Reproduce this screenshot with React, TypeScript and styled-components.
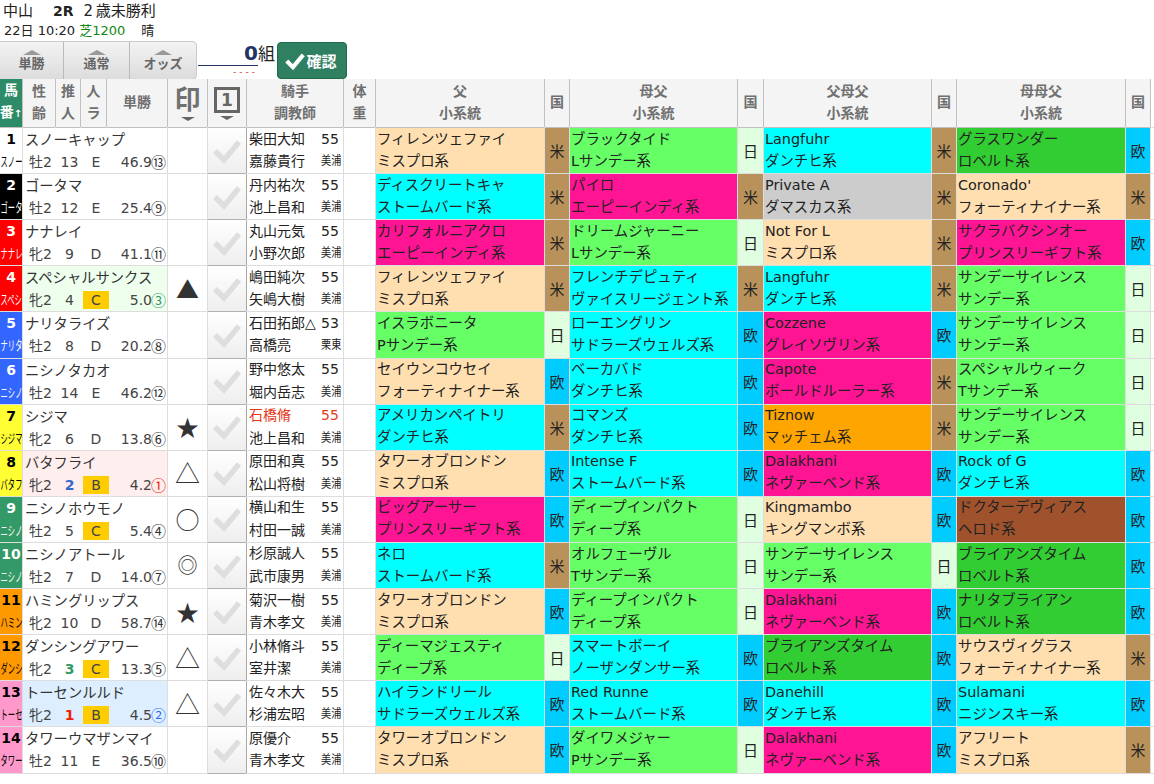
import { Fragment } from "react";
import styled, { createGlobalStyle } from "styled-components";

const SANS = `"DejaVu Sans", "Noto Sans CJK JP", sans-serif`;
const CJK = `"Noto Sans CJK JP", sans-serif`;

const LINE_COLORS: Record<string, string> = {
  W: "#ffdeb0",
  G: "#66ff66",
  C: "#00ffff",
  P: "#ff1493",
  L: "#32cd32",
  O: "#ffa500",
  A: "#cccccc",
  B: "#a0522d",
};

const COUNTRY_COLORS: Record<string, string> = {
  米: "#b8925a",
  日: "#e0ffe0",
  欧: "#00ccff",
};

const FRAMES = [
  { bg: "#ffffff", fg: "#000" },
  { bg: "#000000", fg: "#fff" },
  { bg: "#ff0000", fg: "#fff" },
  { bg: "#3366ff", fg: "#fff" },
  { bg: "#ffff33", fg: "#000" },
  { bg: "#339966", fg: "#fff" },
  { bg: "#ff9900", fg: "#000" },
  { bg: "#ff99cc", fg: "#000" },
];

const MARK_SIZES: Record<string, number> = {
  "▲": 23,
  "★": 23,
  "△": 25,
  "○": 24,
  "◎": 20,
};

type Ped = [string, string, string, string];

type Horse = {
  no: number;
  frame: number;
  short: string;
  name: string;
  sex: string;
  pop: string;
  popColor?: string;
  rank: string;
  odds: string;
  order: string;
  orderColor?: string;
  tint?: string;
  mark?: string;
  jockey: string;
  weight: string;
  trainer: string;
  stable: string;
  red?: boolean;
  peds: Ped[];
};

const TOWER: Ped = ["タワーオブロンドン", "ミスプロ系", "W", "欧"];
const FIRENZE: Ped = ["フィレンツェファイ", "ミスプロ系", "W", "米"];
const LANGFUHR: Ped = ["Langfuhr", "ダンチヒ系", "C", "米"];
const SS: Ped = ["サンデーサイレンス", "サンデー系", "G", "日"];
const DALAKHANI: Ped = ["Dalakhani", "ネヴァーベンド系", "P", "欧"];
const DEEP: Ped = ["ディープインパクト", "ディープ系", "G", "日"];

const HORSES: Horse[] = [
  { no: 1, frame: 0, short: "スノー", name: "スノーキャップ", sex: "牡2", pop: "13", rank: "E", odds: "46.9", order: "⑬", jockey: "柴田大知", weight: "55", trainer: "嘉藤貴行", stable: "美浦",
    peds: [FIRENZE, ["ブラックタイド", "Lサンデー系", "G", "日"], LANGFUHR, ["グラスワンダー", "ロベルト系", "L", "欧"]] },
  { no: 2, frame: 1, short: "ゴータ", name: "ゴータマ", sex: "牡2", pop: "12", rank: "E", odds: "25.4", order: "⑨", jockey: "丹内祐次", weight: "55", trainer: "池上昌和", stable: "美浦",
    peds: [["ディスクリートキャ", "ストームバード系", "C", "米"], ["パイロ", "エーピーインディ系", "P", "米"], ["Private A", "ダマスカス系", "A", "米"], ["Coronado'", "フォーティナイナー系", "W", "米"]] },
  { no: 3, frame: 2, short: "ナナレ", name: "ナナレイ", sex: "牝2", pop: "9", rank: "D", odds: "41.1", order: "⑪", jockey: "丸山元気", weight: "55", trainer: "小野次郎", stable: "美浦",
    peds: [["カリフォルニアクロ", "エーピーインディ系", "P", "米"], ["ドリームジャーニー", "Lサンデー系", "G", "日"], ["Not For L", "ミスプロ系", "W", "米"], ["サクラバクシンオー", "プリンスリーギフト系", "P", "欧"]] },
  { no: 4, frame: 2, short: "スペシ", name: "スペシャルサンクス", sex: "牝2", pop: "4", rank: "C", odds: "5.0", order: "③", orderColor: "#339966", tint: "#eeffee", mark: "▲", jockey: "嶋田純次", weight: "55", trainer: "矢嶋大樹", stable: "美浦",
    peds: [FIRENZE, ["フレンチデピュティ", "ヴァイスリージェント系", "C", "米"], LANGFUHR, SS] },
  { no: 5, frame: 3, short: "ナリタ", name: "ナリタライズ", sex: "牡2", pop: "8", rank: "D", odds: "20.2", order: "⑧", jockey: "石田拓郎△", weight: "53", trainer: "高橋亮", stable: "栗東",
    peds: [["イスラボニータ", "Pサンデー系", "G", "日"], ["ローエングリン", "サドラーズウェルズ系", "C", "欧"], ["Cozzene", "グレイソヴリン系", "P", "欧"], SS] },
  { no: 6, frame: 3, short: "ニシノ", name: "ニシノタカオ", sex: "牡2", pop: "14", rank: "E", odds: "46.2", order: "⑫", jockey: "野中悠太", weight: "55", trainer: "堀内岳志", stable: "美浦",
    peds: [["セイウンコウセイ", "フォーティナイナー系", "W", "欧"], ["ベーカバド", "ダンチヒ系", "C", "欧"], ["Capote", "ボールドルーラー系", "P", "米"], ["スペシャルウィーク", "Tサンデー系", "G", "日"]] },
  { no: 7, frame: 4, short: "シジマ", name: "シジマ", sex: "牝2", pop: "6", rank: "D", odds: "13.8", order: "⑥", mark: "★", jockey: "石橋脩", weight: "55", trainer: "池上昌和", stable: "美浦", red: true,
    peds: [["アメリカンペイトリ", "ダンチヒ系", "C", "米"], ["コマンズ", "ダンチヒ系", "C", "欧"], ["Tiznow", "マッチェム系", "O", "米"], SS] },
  { no: 8, frame: 4, short: "バタフ", name: "バタフライ", sex: "牝2", pop: "2", popColor: "#3366cc", rank: "B", odds: "4.2", order: "①", orderColor: "#ee2200", tint: "#ffeeee", mark: "△", jockey: "原田和真", weight: "55", trainer: "松山将樹", stable: "美浦",
    peds: [TOWER, ["Intense F", "ストームバード系", "C", "欧"], DALAKHANI, ["Rock of G", "ダンチヒ系", "C", "欧"]] },
  { no: 9, frame: 5, short: "ニシノ", name: "ニシノホウモノ", sex: "牡2", pop: "5", rank: "C", odds: "5.4", order: "④", mark: "○", jockey: "横山和生", weight: "55", trainer: "村田一誠", stable: "美浦",
    peds: [["ビッグアーサー", "プリンスリーギフト系", "P", "欧"], DEEP, ["Kingmambo", "キングマンボ系", "W", "欧"], ["ドクターデヴィアス", "ヘロド系", "B", "欧"]] },
  { no: 10, frame: 5, short: "ニシノ", name: "ニシノアトール", sex: "牡2", pop: "7", rank: "D", odds: "14.0", order: "⑦", mark: "◎", jockey: "杉原誠人", weight: "55", trainer: "武市康男", stable: "美浦",
    peds: [["ネロ", "ストームバード系", "C", "米"], ["オルフェーヴル", "Tサンデー系", "G", "日"], SS, ["ブライアンズタイム", "ロベルト系", "L", "欧"]] },
  { no: 11, frame: 6, short: "ハミン", name: "ハミングリップス", sex: "牝2", pop: "10", rank: "D", odds: "58.7", order: "⑭", mark: "★", jockey: "菊沢一樹", weight: "55", trainer: "青木孝文", stable: "美浦",
    peds: [TOWER, DEEP, DALAKHANI, ["ナリタブライアン", "ロベルト系", "L", "欧"]] },
  { no: 12, frame: 6, short: "ダンシ", name: "ダンシングアワー", sex: "牝2", pop: "3", popColor: "#339966", rank: "C", odds: "13.3", order: "⑤", mark: "△", jockey: "小林脩斗", weight: "55", trainer: "室井潔", stable: "美浦",
    peds: [["ディーマジェスティ", "ディープ系", "G", "日"], ["スマートボーイ", "ノーザンダンサー系", "C", "欧"], ["ブライアンズタイム", "ロベルト系", "L", "欧"], ["サウスヴィグラス", "フォーティナイナー系", "W", "米"]] },
  { no: 13, frame: 7, short: "トーセ", name: "トーセンルルド", sex: "牝2", pop: "1", popColor: "#ee2200", rank: "B", odds: "4.5", order: "②", orderColor: "#3366ff", tint: "#ddeeff", mark: "△", jockey: "佐々木大", weight: "55", trainer: "杉浦宏昭", stable: "美浦",
    peds: [["ハイランドリール", "サドラーズウェルズ系", "C", "欧"], ["Red Runne", "ストームバード系", "C", "欧"], ["Danehill", "ダンチヒ系", "C", "欧"], ["Sulamani", "ニジンスキー系", "C", "欧"]] },
  { no: 14, frame: 7, short: "タワー", name: "タワーウマザンマイ", sex: "牡2", pop: "11", rank: "E", odds: "36.5", order: "⑩", jockey: "原優介", weight: "55", trainer: "青木孝文", stable: "美浦",
    peds: [TOWER, ["ダイワメジャー", "Pサンデー系", "G", "日"], DALAKHANI, ["アフリート", "ミスプロ系", "W", "米"]] },
];

const PED_HEADS: [string, string][] = [
  ["父", "小系統"],
  ["母父", "小系統"],
  ["父母父", "小系統"],
  ["母母父", "小系統"],
];

const CheckIcon = ({ size, color, width }: { size: number; color: string; width: number }) => (
  <svg width={size} height={size} viewBox="0 0 32 32" fill="none">
    <polyline points="4,16 13,25 28,7" stroke={color} strokeWidth={width} />
  </svg>
);

export default function App() {
  return (
    <>
      <GlobalStyle />
      <Info>
        <TitleRow>
          <span>中山</span>
          <RaceNo>2R</RaceNo>
          <span>2 歳未勝利</span>
        </TitleRow>
        <SubRow>
          <span>22日 10:20</span>
          <Course>芝1200</Course>
          <Weather>晴</Weather>
        </SubRow>
      </Info>

      <Toolbar>
        <ButtonGroup>
          {["単勝", "通常", "オッズ"].map((label) => (
            <SortButton key={label}>
              <UpArrow />
              {label}
            </SortButton>
          ))}
        </ButtonGroup>
        <CountField>
          <CountValue>0</CountValue>
          <CountDash>----</CountDash>
        </CountField>
        <CountUnit>組</CountUnit>
        <ConfirmButton>
          <CheckIcon size={22} color="#fff" width={6} />
          確認
        </ConfirmButton>
      </Toolbar>

      <Table>
        <FrameHead>
          <span>馬</span>
          <span>
            番<SortMark>↑</SortMark>
          </span>
        </FrameHead>
        <HeadCell>性<br />齢</HeadCell>
        <HeadCell>推<br />人</HeadCell>
        <HeadCell>人<br />ラ</HeadCell>
        <HeadCell>単勝</HeadCell>
        <HeadCell>
          <MarkTitle>印</MarkTitle>
          <DownArrow />
        </HeadCell>
        <HeadCell>
          <BoxTitle>1</BoxTitle>
          <DownArrow />
        </HeadCell>
        <HeadCell>騎手<br />調教師</HeadCell>
        <HeadCell>体<br />重</HeadCell>
        {PED_HEADS.map(([a, b]) => (
          <Fragment key={a}>
            <HeadCell>{a}<br />{b}</HeadCell>
            <HeadCell>国</HeadCell>
          </Fragment>
        ))}
        <Stub />

        {HORSES.map((h) => (
          <Fragment key={h.no}>
            <FrameCell $bg={FRAMES[h.frame].bg} $fg={FRAMES[h.frame].fg}>
              <FrameNo>{h.no}</FrameNo>
              <FrameName>{h.short}</FrameName>
            </FrameCell>
            <NameCell $bg={h.tint}>
              <HorseName>{h.name}</HorseName>
              <Stats>
                <span>{h.sex}</span>
                <Pop $color={h.popColor}>{h.pop}</Pop>
                <Rank $badge={h.rank === "B" || h.rank === "C"}>{h.rank}</Rank>
                <Odds>
                  {h.odds}
                  <Order $color={h.orderColor}>{h.order}</Order>
                </Odds>
              </Stats>
            </NameCell>
            <MarkCell $size={h.mark ? MARK_SIZES[h.mark] : 23}>{h.mark}</MarkCell>
            <CheckCell>
              <CheckIcon size={32} color="#dedede" width={5.5} />
            </CheckCell>
            <JockeyCell $red={h.red}>
              <Jockey>{h.jockey}</Jockey>
              <span>{h.weight}</span>
              <Trainer>{h.trainer}</Trainer>
              <Stable>{h.stable}</Stable>
            </JockeyCell>
            <Blank />
            {h.peds.map((p, i) => (
              <Fragment key={i}>
                <PedCell $bg={LINE_COLORS[p[2]]}>
                  <span>{p[0]}</span>
                  <span>{p[1]}</span>
                </PedCell>
                <CountryCell $bg={COUNTRY_COLORS[p[3]]}>{p[3]}</CountryCell>
              </Fragment>
            ))}
            <Stub />
          </Fragment>
        ))}
      </Table>
    </>
  );
}

const GlobalStyle = createGlobalStyle`
  html, body {
    margin: 0;
    background: #fff;
    font-family: ${SANS};
    color: #222;
  }
`;

const Info = styled.div`
  height: 42px;
  padding-left: 3px;
`;

const TitleRow = styled.div`
  display: flex;
  height: 22px;
  align-items: baseline;
  font-size: 15px;
  line-height: 22px;
  gap: 20px;
  word-spacing: -2px;
  white-space: pre;
`;

const RaceNo = styled.b`
  font-size: 14px;
  margin-right: -10px;
`;

const SubRow = styled.div`
  display: flex;
  height: 18px;
  align-items: baseline;
  padding-left: 1px;
  font-size: 13px;
  line-height: 18px;
`;

const Course = styled.span`
  color: #118811;
  margin-left: 4px;
`;

const Weather = styled.span`
  margin-left: 16px;
`;

const Toolbar = styled.div`
  display: flex;
  height: 37px;
`;

const ButtonGroup = styled.div`
  display: grid;
  grid-template-columns: 63px 65px 66px;
  gap: 1px;
  width: 196px;
  background: #bbb;
  border-radius: 0 4px 4px 0;
  box-shadow: 0 0 0 1px #ccc;
  overflow: hidden;
`;

const SortButton = styled.div`
  display: flex;
  flex-direction: column;
  align-items: center;
  padding-top: 8px;
  background: linear-gradient(#f3f3f3, #dcdcdc);
  color: #666;
  font-size: 13px;
  font-weight: 700;
  line-height: 17px;
`;

const UpArrow = styled.i`
  width: 0;
  height: 0;
  border-left: 9px solid transparent;
  border-right: 9px solid transparent;
  border-bottom: 5px solid #999;
`;

const CountField = styled.div`
  display: flex;
  flex-direction: column;
  width: 60px;
  margin-left: 2px;
`;

const CountValue = styled.div`
  height: 23px;
  line-height: 23px;
  text-align: right;
  border-bottom: 1px solid #223366;
  color: #223366;
  font-size: 20px;
  font-weight: 700;
`;

const CountDash = styled.div`
  text-align: right;
  color: #dd3333;
  font-size: 9px;
  letter-spacing: 3px;
  line-height: 12px;
`;

const CountUnit = styled.div`
  font-size: 17px;
  line-height: 24px;
  width: 19px;
`;

const ConfirmButton = styled.div`
  display: flex;
  align-items: center;
  justify-content: center;
  width: 70px;
  padding-right: 3px;
  box-sizing: border-box;
  border: 1px solid #1f6a4a;
  border-radius: 4px;
  background: #2f8060;
  color: #fff;
  font-size: 15px;
  font-weight: 700;
`;

const Table = styled.div`
  display: grid;
  width: 1154px;
  grid-template-columns: 22px 32px 24px 25px 60px 39px 38px 96px 31px 168px 24px 167px 25px 167px 24px 168px 24px 3px;
  grid-template-rows: 48px repeat(14, 45.11px);
  gap: 1px;
  background: #dddddd;
  border-bottom: 1px solid #dddddd;
`;

const HeadCell = styled.div`
  display: flex;
  flex-direction: column;
  align-items: center;
  justify-content: center;
  padding-bottom: 2px;
  text-align: center;
  background: #f4f4f4;
  box-shadow: 1px 0 0 #c0c0c0, 0 1px 0 #c0c0c0;
  color: #707070;
  font-size: 14px;
  font-weight: 700;
  line-height: 22px;
`;

const FrameHead = styled(HeadCell)`
  background: #2e8b67;
  color: #fff;
  white-space: nowrap;
`;

const SortMark = styled.span`
  font-size: 10px;
`;

const MarkTitle = styled.div`
  font-size: 26px;
  line-height: 28px;
  margin-top: 3px;
`;

const BoxTitle = styled.div`
  width: 26px;
  height: 26px;
  box-sizing: border-box;
  margin-top: 3px;
  border: 3px solid #666;
  font-size: 17px;
  line-height: 20px;
  color: #666;
`;

const DownArrow = styled.i`
  width: 0;
  height: 0;
  margin-top: 3px;
  border-left: 7px solid transparent;
  border-right: 7px solid transparent;
  border-top: 4px solid #666;
`;

const Stub = styled.div`
  background: #fff;
`;

const Blank = styled.div`
  background: #fff;
`;

const FrameCell = styled.div<{ $bg: string; $fg: string }>`
  display: flex;
  flex-direction: column;
  align-items: center;
  overflow: hidden;
  background: ${(p) => p.$bg};
  color: ${(p) => p.$fg};
`;

const FrameNo = styled.div`
  height: 23px;
  line-height: 23px;
  font-size: 14px;
  font-weight: 700;
`;

const FrameName = styled.div`
  height: 20px;
  line-height: 20px;
  font-family: ${CJK};
  font-size: 13px;
  white-space: nowrap;
  transform: scaleX(0.56);
`;

const NameCell = styled.div<{ $bg?: string }>`
  grid-column: span 4;
  background: ${(p) => p.$bg ?? "#fff"};
  min-width: 0;
`;

const HorseName = styled.div`
  height: 25px;
  line-height: 21px;
  padding-left: 2px;
  font-family: ${CJK};
  font-size: 14.3px;
  color: #333;
  white-space: nowrap;
`;

const Stats = styled.div`
  display: grid;
  grid-template-columns: 31px 27px 26px 1fr;
  height: 18px;
  padding-left: 2px;
  align-items: center;
  text-align: center;
  color: #444;
  font-size: 14px;
  line-height: 16px;
`;

const Pop = styled.span<{ $color?: string }>`
  color: ${(p) => p.$color ?? "#444"};
  font-weight: ${(p) => (p.$color ? 700 : 400)};
`;

const Rank = styled.span<{ $badge: boolean }>`
  height: 18px;
  line-height: 18px;
  background: ${(p) => (p.$badge ? "#ffcc00" : "transparent")};
`;

const Odds = styled.span`
  display: flex;
  justify-content: flex-end;
  align-items: center;
  padding-right: 1px;
`;

const Order = styled.span<{ $color?: string }>`
  font-family: ${CJK};
  color: ${(p) => p.$color ?? "#333"};
  font-size: 15px;
  margin-left: -1px;
`;

const MarkCell = styled.div<{ $size: number }>`
  display: flex;
  align-items: center;
  justify-content: center;
  padding-bottom: 2px;
  background: #fff;
  color: #333;
  font-family: ${CJK};
  font-size: ${(p) => p.$size}px;
`;

const CheckCell = styled.div`
  display: flex;
  align-items: center;
  justify-content: center;
  background: linear-gradient(#ffffff, #eeeeee);
  box-shadow: 1px 0 0 #a8a8a8, 0 1px 0 #b0b0b0;
`;

const JockeyCell = styled.div<{ $red?: boolean }>`
  display: grid;
  grid-template-columns: 72px 1fr;
  grid-template-rows: 21px 24px;
  align-items: center;
  padding-left: 2px;
  background: #fff;
  font-size: 14px;
  line-height: 18px;
  color: ${(p) => (p.$red ? "#e33a1a" : "#222")};
`;

const Jockey = styled.span`
  white-space: nowrap;
`;

const Trainer = styled.span`
  color: #222;
  white-space: nowrap;
`;

const Stable = styled.span`
  color: #222;
  font-size: 12px;
  white-space: nowrap;
  transform: scaleX(0.85);
  transform-origin: left center;
`;

const PedCell = styled.div<{ $bg: string }>`
  display: flex;
  flex-direction: column;
  justify-content: center;
  padding: 0 0 2px 1px;
  background: ${(p) => p.$bg};
  color: #222;
  font-size: 14.4px;
  line-height: 22px;
  white-space: nowrap;
  overflow: hidden;
`;

const CountryCell = styled.div<{ $bg: string }>`
  display: flex;
  align-items: center;
  justify-content: center;
  background: ${(p) => p.$bg};
  color: #222;
  font-size: 15px;
`;
